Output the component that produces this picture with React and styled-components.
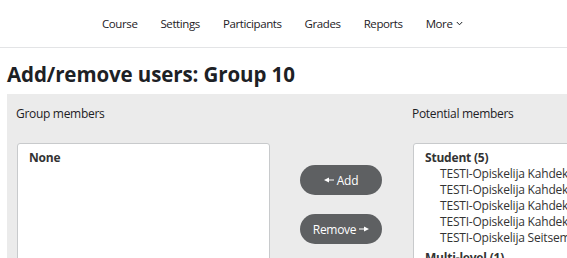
import React from "react";
import styled, { createGlobalStyle } from "styled-components";

const GlobalStyle = createGlobalStyle`
  body {
    margin: 0;
    background: #fff;
    font-family: "Open Sans", "Noto Sans", sans-serif;
    color: #1d2125;
    overflow: hidden;
  }
`;

const NavBar = styled.nav`
  height: 47px;
  border-bottom: 1px solid #e3e4e6;
  display: flex;
  align-items: center;
  padding-left: 102px;
  gap: 23px;
  font-size: 11.5px;
`;

const NavItem = styled.span`
  color: #1d2125;
  letter-spacing: -0.4px;
  display: flex;
  align-items: center;
`;

const Caret = styled.svg`
  width: 7px;
  height: 5px;
  margin-left: 4px;
`;

const Title = styled.h2`
  margin: 11px 0 0 7px;
  font-size: 20.5px;
  font-weight: 700;
  line-height: 30px;
  letter-spacing: -0.1px;
`;

const Panel = styled.div`
  margin: 5px 0 0 7px;
  background: #ebebeb;
  display: grid;
  grid-template-columns: 254px 142px 1fr;
  padding: 0 0 0 9px;
  height: 200px;
`;

const Column = styled.div`
  display: flex;
  flex-direction: column;
  padding-top: 11px;
`;

const Label = styled.div`
  font-size: 12px;
  line-height: 18px;
  height: 38px;
  letter-spacing: -0.3px;
`;

const ListBox = styled.div`
  margin-left: 1px;
  background: #fff;
  border: 1px solid #c8cacc;
  border-radius: 3px;
  flex: 1;
  padding: 6px 0 0 11px;
  font-size: 12px;
  line-height: 16px;
  overflow: hidden;
  white-space: nowrap;
  letter-spacing: -0.2px;
`;

const GroupName = styled.div`
  font-weight: 700;
  color: #333;
`;

const Option = styled.div`
  padding-left: 15px;
  color: #333;
  & + ${GroupName} {
    margin-top: 4px;
  }
`;

const Buttons = styled.div`
  display: flex;
  flex-direction: column;
  align-items: center;
  gap: 19px;
  padding-top: 71px;
`;

const PillButton = styled.button`
  width: 82px;
  height: 30px;
  border: none;
  border-radius: 15px;
  background: #5e6062;
  color: #fff;
  font-family: "Open Sans", sans-serif;
  font-size: 12px;
  letter-spacing: -0.3px;
  display: flex;
  align-items: center;
  justify-content: center;
  gap: 3px;
  padding: 0;
`;

const ArrowIcon = styled.svg`
  width: 10px;
  height: 6px;
`;

function ArrowLeft() {
  return (
    <ArrowIcon viewBox="0 0 10 6">
      <path d="M0 3 L5 0.5 L5 5.5 Z M5 2.4 H10 V3.6 H5 Z" fill="#fff" />
    </ArrowIcon>
  );
}

function ArrowRight() {
  return (
    <ArrowIcon viewBox="0 0 10 6">
      <path d="M10 3 L5 0.5 L5 5.5 Z M0 2.4 H5 V3.6 H0 Z" fill="#fff" />
    </ArrowIcon>
  );
}

const members = [
  "TESTI-Opiskelija Kahdeksan",
  "TESTI-Opiskelija Kahdeksantoista",
  "TESTI-Opiskelija Kahdeksankymmentä",
  "TESTI-Opiskelija Kahdeksas",
  "TESTI-Opiskelija Seitsemän",
];

export default function App() {
  return (
    <>
      <GlobalStyle />
      <NavBar>
        <NavItem>Course</NavItem>
        <NavItem>Settings</NavItem>
        <NavItem>Participants</NavItem>
        <NavItem>Grades</NavItem>
        <NavItem>Reports</NavItem>
        <NavItem>
          More
          <Caret viewBox="0 0 7 5">
            <path d="M0.8 1 L3.5 3.8 L6.2 1" fill="none" stroke="#1d2125" strokeWidth="1" />
          </Caret>
        </NavItem>
      </NavBar>
      <Title>Add/remove users: Group 10</Title>
      <Panel>
        <Column>
          <Label>Group members</Label>
          <ListBox>
            <GroupName>None</GroupName>
          </ListBox>
        </Column>
        <Buttons>
          <PillButton>
            <ArrowLeft />
            Add
          </PillButton>
          <PillButton>
            Remove
            <ArrowRight />
          </PillButton>
        </Buttons>
        <Column>
          <Label>Potential members</Label>
          <ListBox>
            <GroupName>Student (5)</GroupName>
            {members.map((m) => (
              <Option key={m}>{m}</Option>
            ))}
            <GroupName>Multi-level (1)</GroupName>
          </ListBox>
        </Column>
      </Panel>
    </>
  );
}
